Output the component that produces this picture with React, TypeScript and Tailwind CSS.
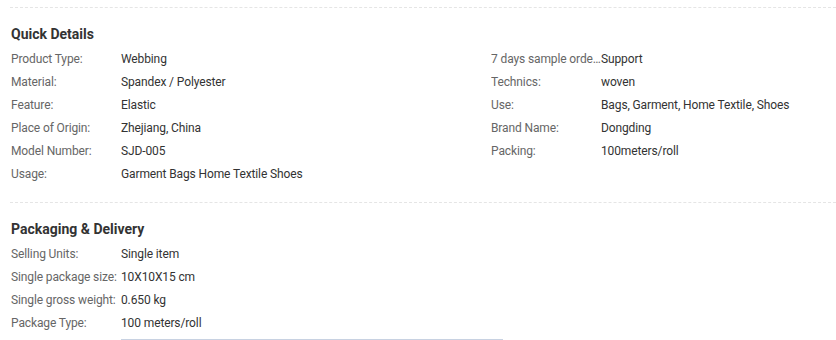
import React from 'react'

type Attr = { label: string; value: string }

const quickLeft: Attr[] = [
  { label: 'Product Type:', value: 'Webbing' },
  { label: 'Material:', value: 'Spandex / Polyester' },
  { label: 'Feature:', value: 'Elastic' },
  { label: 'Place of Origin:', value: 'Zhejiang, China' },
  { label: 'Model Number:', value: 'SJD-005' },
  { label: 'Usage:', value: 'Garment Bags Home Textile Shoes' },
]

const quickRight: Attr[] = [
  { label: '7 days sample order lead time:', value: 'Support' },
  { label: 'Technics:', value: 'woven' },
  { label: 'Use:', value: 'Bags, Garment, Home Textile, Shoes' },
  { label: 'Brand Name:', value: 'Dongding' },
  { label: 'Packing:', value: '100meters/roll' },
]

const packaging: Attr[] = [
  { label: 'Selling Units:', value: 'Single item' },
  { label: 'Single package size:', value: '10X10X15 cm' },
  { label: 'Single gross weight:', value: '0.650 kg' },
  { label: 'Package Type:', value: '100 meters/roll' },
]

function AttrList({ items }: { items: Attr[] }) {
  return (
    <ul className="flex flex-col">
      {items.map((item) => (
        <li key={item.label} className="flex h-[23px] items-center text-[12px] leading-[23px] tracking-[-0.12px]">
          <span className="w-[110px] shrink-0 truncate text-[#666]">{item.label}</span>
          <span className="whitespace-nowrap text-[#333]">{item.value}</span>
        </li>
      ))}
    </ul>
  )
}

export default function App() {
  return (
    <div
      className="h-[340px] w-[836px] overflow-hidden bg-white pt-[7px] pl-[10px]"
      style={{ fontFamily: 'Roboto, "Liberation Sans", Arial, sans-serif' }}
    >
      <section className="border-t border-dashed border-[#e5e5e5] pt-[16px] pb-[16px] pl-px">
        <h3 className="mb-[4px] text-[14px] leading-[20px] font-bold text-[#333]">Quick Details</h3>
        <div className="grid grid-cols-[480px_480px]">
          <AttrList items={quickLeft} />
          <AttrList items={quickRight} />
        </div>
      </section>
      <section className="border-t border-dashed border-[#e5e5e5] pt-[16px] pl-px">
        <h3 className="mb-[4px] text-[14px] leading-[20px] font-bold text-[#333]">Packaging &amp; Delivery</h3>
        <AttrList items={packaging} />
        <div className="mt-[4px] ml-[110px] h-px w-[382px] bg-[#c8d2e2]" />
      </section>
    </div>
  )
}
